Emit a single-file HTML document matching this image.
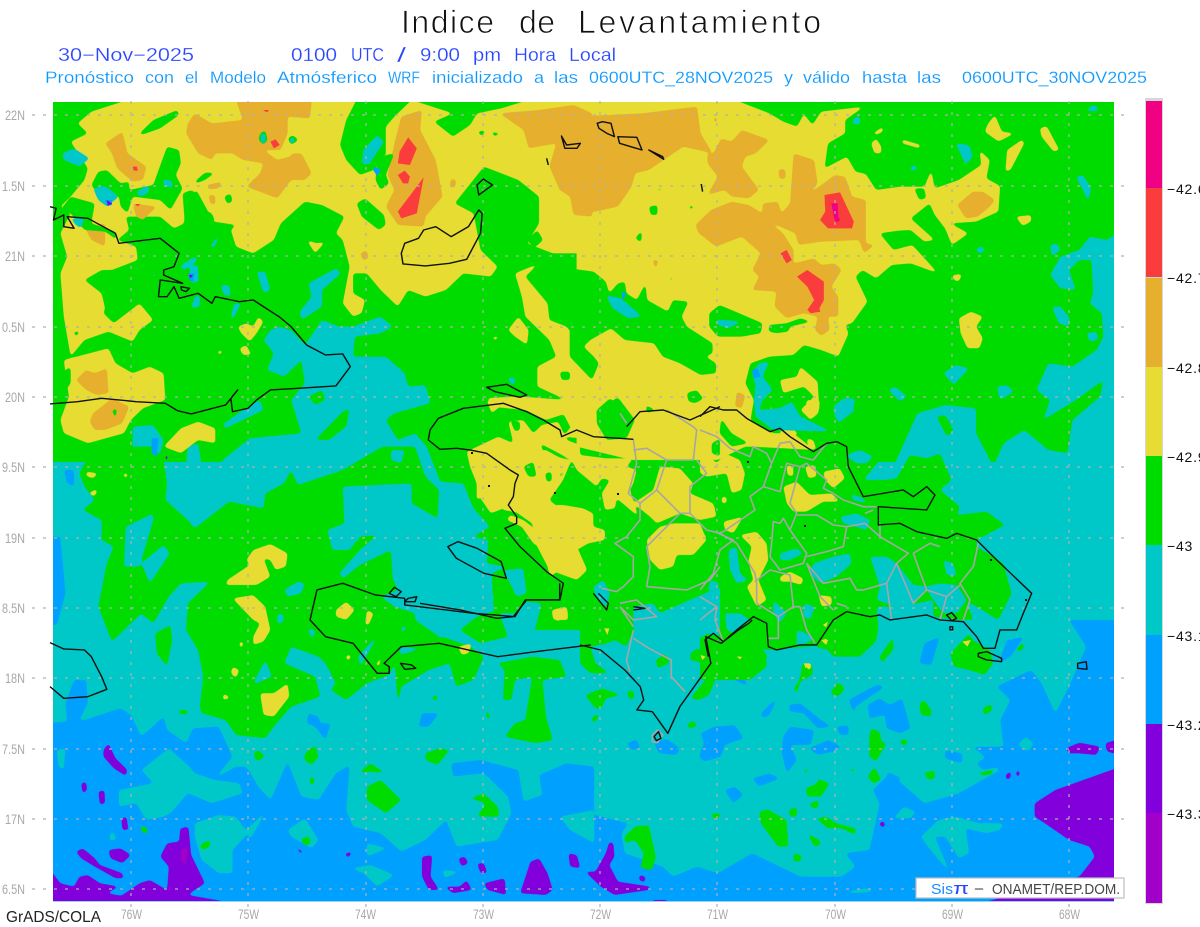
<!DOCTYPE html>
<html><head><meta charset="utf-8"><title>Indice de Levantamiento</title>
<style>
html,body{margin:0;padding:0;background:#fff;width:1200px;height:927px;overflow:hidden}
svg{position:absolute;left:0;top:0;display:block}
text{font-family:"Liberation Sans",sans-serif}
.g{fill:#00dc00}.t{fill:#00c8c8}.b{fill:#00a0ff}.p{fill:#8200dc}.m{fill:#a000c8}.y{fill:#e6dc32}.o{fill:#e6af2d}.r{fill:#fa3c3c}.k{fill:#f00082}
.lab{fill:#a8a8a8;font-size:14px}
.cb{fill:#111;font-size:14px;letter-spacing:.8px}
.ti{font-size:32px;fill:#111;stroke:#fff;stroke-width:.8px}
.r2{font-size:18px;fill:#2846ff;stroke:#fff;stroke-width:.2px}
.r3{font-size:16.5px;fill:#0c98ff;stroke:#fff;stroke-width:.15px}
</style></head><body>
<svg width="1200" height="927" viewBox="0 0 1200 927" xmlns="http://www.w3.org/2000/svg">
<defs><clipPath id="mc"><rect x="53" y="102" width="1061" height="799"/></clipPath>
<filter id="s" x="-5%" y="-5%" width="110%" height="110%" color-interpolation-filters="sRGB"><feGaussianBlur stdDeviation="4.5"/><feComponentTransfer><feFuncA type="linear" slope="6" intercept="-2.5"/></feComponentTransfer></filter></defs>
<g clip-path="url(#mc)">
<rect x="53" y="101" width="1061" height="800" class="g"/>
<rect x="53" y="462" width="1061" height="440" class="t"/>
<!-- teal top-left -->
<g class="t" filter="url(#s)" transform="translate(50,100) scale(.3444,.3333)">
<path d="M640,690 665,680 700,690 740,735 790,660 840,680 880,680 960,650 995,680 960,700 885,710 880,770 975,770 1030,820 1040,860 1090,855 1105,910 1000,940 975,960 1010,1020 1060,1000 1135,1090 490,1090 580,1015 730,1000 700,900 740,850 730,780 680,830 630,810 650,760 620,720Z"/>
<path d="M500,975 560,930 610,900 620,930 560,960 510,985Z"/>
<path d="M240,980 300,975 330,1020 320,1060 240,1090Z"/>
<path d="M150,1090 180,1035 230,1090Z"/>
<path d="M395,1090 400,1040 430,1030 440,1090Z"/>
</g>
<!-- teal right -->
<g class="t" filter="url(#s)" transform="translate(580,100) scale(.3444,.3333)">
<path d="M1570,390 1530,420 1480,410 1450,450 1395,470 1365,525 1395,565 1440,570 1420,510 1450,480 1485,480 1490,580 1480,610 1515,640 1520,710 1500,750 1430,800 1360,790 1325,870 1365,900 1345,960 1440,900 1520,840 1510,890 1430,960 1415,1060 1360,1050 1290,990 1230,1030 1200,1100 1150,1000 1150,925 1060,915 980,940 910,1100 1570,1100Z"/>
</g>
<!-- blue base -->
<g class="b" filter="url(#s)" transform="translate(50,450) scale(.3444,.3333)">
<path d="M-10,820 100,810 205,775 235,795 265,860 330,800 340,840 395,880 415,835 490,830 530,920 480,985 540,950 570,950 605,1010 640,1050 690,935 730,1040 780,1050 830,970 870,945 860,1080 880,1130 960,1150 1020,1205 1090,1170 1150,1110 1180,1190 1300,1170 1340,1090 1330,1040 1260,970 1170,980 1165,940 1250,930 1360,960 1375,1055 1430,1035 1420,975 1500,940 1580,950 1580,1380 -10,1380Z"/>
<path d="M-10,260 30,260 45,430 20,525 -10,525Z"/>
<path d="M750,790 780,800 785,820 815,820 800,870 770,830 745,820Z"/>
<path d="M1080,790 1130,790 1100,830 1070,830Z"/>
<path d="M40,60 70,60 70,110 50,100Z"/>
<path d="M70,690 105,690 110,760 80,820 50,820 45,760Z"/>
</g>
<g class="b" filter="url(#s)" transform="translate(580,620) scale(.3444,.3333)">
<path d="M-10,570 100,600 140,610 120,640 130,700 240,740 270,770 340,740 400,760 500,700 640,770 760,770 800,740 770,700 840,690 860,600 870,550 850,510 900,460 1000,550 1100,520 1220,450 1140,380 1230,380 1220,300 1250,240 1210,200 1310,150 1340,190 1380,280 1420,200 1470,80 1420,0 1570,0 1570,870 -10,870Z"/>
<path d="M135,370 165,358 175,385 150,390Z"/><path d="M215,370 250,355 290,385 280,405 230,400Z"/>
<path d="M350,340 390,320 450,315 475,355 420,375 410,410 360,425 345,410 360,370Z"/>
<path d="M590,350 610,320 680,330 670,375 610,375 630,420 600,460 585,395Z"/>
<path d="M665,385 720,360 760,380 735,395 690,405Z"/><path d="M500,475 550,460 580,475 520,500Z"/>
<path d="M420,510 450,500 475,525 445,550Z"/><path d="M525,280 575,230 550,285 530,295Z"/>
<path d="M605,255 640,250 700,300 730,320 690,325 650,280 610,275Z"/><path d="M745,320 780,315 780,345 755,345Z"/>
<path d="M835,255 870,235 900,255 935,235 950,290 960,325 930,340 890,325 885,285 840,295Z"/>
<path d="M780,240 860,195 885,200 800,260 795,280Z"/><path d="M-10,440 40,470 10,540 -10,550Z"/>
<path d="M890,455 935,475 900,490Z"/><path d="M985,130 1000,70 1045,50 1030,100 1020,135Z"/>
<path d="M415,140 450,135 490,200 450,180 415,160Z"/><path d="M1060,390 1110,400 1110,430 1060,415Z"/>
<path d="M1150,430 1200,400 1230,400 1220,440 1170,450Z"/>
<path d="M1240,60 1290,50 1250,110 1215,130Z"/>
</g>
<!-- teal islands on blue -->
<g class="t" filter="url(#s)" transform="translate(50,450) scale(.3444,.3333)">
<path d="M265,960 345,895 405,950 420,970 480,990 550,1000 560,1030 470,1060 400,1030 350,1090 330,1100 280,1110 250,1060 200,1070 200,1020 300,1000Z"/>
<path d="M20,900 45,895 40,960 25,950Z"/>
<path d="M690,1140 740,1105 780,1170 760,1195 700,1160Z"/>
<path d="M420,1120 490,1095 540,1100 575,1150 530,1200 530,1270 490,1270 440,1230 420,1160Z"/>
<path d="M570,1140 630,1080 580,1170Z"/>
<path d="M875,1255 930,1245 1000,1275 950,1310 910,1270Z"/>
<path d="M920,1180 980,1195 920,1220Z"/>
<path d="M1140,1260 1190,1265 1145,1285Z"/>
<path d="M180,1140 195,1170 170,1170Z"/>
<path d="M1480,1100 1580,1080 1580,1180 1510,1140Z"/>
</g>
<g class="t" filter="url(#s)" transform="translate(580,620) scale(.3444,.3333)">
<path d="M990,650 1040,600 1090,590 1160,610 1230,610 1220,630 1180,640 1120,625 1130,700 1100,715 1060,650 1030,650 1075,760 1050,730 1010,680Z"/>
<path d="M910,595 940,560 975,575 960,595Z"/><path d="M1270,375 1295,350 1318,370 1300,395Z"/>
<path d="M770,815 830,805 860,815 790,820Z"/>
</g>
<!-- purple -->
<g class="p" filter="url(#s)" transform="translate(50,450) scale(.3444,.3333)">
<path d="M155,900 170,880 190,925 225,960 220,978 185,955 155,920Z"/><path d="M90,1000 105,995 108,1020 95,1032Z"/>
<path d="M140,1025 158,1020 160,1060 145,1065Z"/><path d="M207,1105 222,1100 228,1140 210,1140Z"/>
<path d="M75,1205 95,1195 130,1225 145,1245 210,1270 215,1285 190,1285 130,1250 90,1225Z"/>
<path d="M170,1200 205,1195 235,1215 210,1240 175,1225Z"/>
<path d="M-10,1245 30,1300 70,1310 85,1280 110,1275 145,1300 200,1310 165,1330 250,1345 500,1353 500,1370 -10,1370Z"/>
<path d="M320,1220 340,1180 375,1175 378,1135 402,1130 410,1215 450,1300 420,1320 400,1335 500,1353 500,1370 185,1370 185,1353 260,1300 290,1290 340,1320 345,1250Z"/>
<path d="M1080,1220 1110,1215 1105,1280 1130,1320 1100,1320 1080,1280Z"/>
<path d="M1145,1310 1190,1310 1210,1290 1225,1320 1170,1330Z"/><path d="M1185,1225 1205,1220 1215,1240 1195,1250Z"/>
<path d="M1240,1240 1260,1240 1270,1270 1250,1270Z"/><path d="M1260,1300 1320,1285 1325,1335 1270,1320Z"/>
<path d="M1365,1330 1395,1235 1420,1225 1445,1270 1460,1320 1440,1335Z"/><path d="M1505,1210 1530,1215 1540,1255 1510,1250Z"/>
<path d="M710,1185 740,1210 725,1210Z"/><path d="M855,1210 880,1205 865,1225Z"/><path d="M1555,1270 1580,1265 1580,1280Z"/>
</g>
<path class="m" transform="translate(50,450) scale(.3444,.3333)" d="M380,1200 400,1190 395,1245 380,1230Z"/>
<g class="p" filter="url(#s)" transform="translate(580,620) scale(.3444,.3333)">
<path d="M1320,550 1380,510 1570,440 1570,870 1180,870 1180,845 1450,770 1495,710 1480,680 1420,660 1350,610 1320,590Z"/>
<path d="M15,755 45,755 75,700 85,665 97,670 100,710 85,735 110,785 205,800 200,810 100,825 60,800Z"/>
<path d="M170,770 175,765 190,770 190,785 175,785Z"/><path d="M870,605 885,605 885,622 872,620Z"/>
<path d="M1410,385 1450,368 1510,380 1500,405 1450,400 1420,400Z"/><path d="M1525,370 1570,355 1570,405 1530,395Z"/>
<path d="M1235,465 1252,452 1250,475 1238,480Z"/><path d="M1265,455 1278,450 1275,472 1268,470Z"/>
<path d="M210,840 255,840 255,860 210,860Z"/>
</g>
<!-- green over teal -->
<g class="g" filter="url(#s)" transform="translate(50,450) scale(.3444,.3333)">
<path d="M85,70 100,40 135,-10 300,-10 330,30 340,100 335,150 400,210 420,235 520,155 620,175 625,130 680,100 700,60 720,105 850,60 965,-10 1060,-10 1090,80 1130,120 1125,205 1050,160 1050,100 850,110 855,220 805,240 820,300 870,300 900,260 950,255 900,300 840,370 850,385 900,345 990,300 995,385 1010,420 960,440 1000,470 1060,490 1060,510 1130,560 1130,600 1000,590 1020,600 985,675 920,700 860,750 815,720 830,700 800,640 780,620 700,590 680,640 770,680 785,740 700,770 650,830 625,865 540,855 510,810 440,790 435,770 445,680 430,600 395,540 400,460 465,395 380,400 345,440 300,520 265,490 180,575 140,470 165,340 185,290 150,270 150,210 95,180 130,150 100,110Z"/>
<path d="M1010,770 1020,710 1100,660 1160,640 1180,710 1230,690 1260,620 1220,590 1140,560 1100,590 1000,620Z"/>
<path d="M1300,640 1400,620 1480,630 1500,680 1430,690 1440,800 1460,870 1410,880 1320,860 1350,820 1380,810 1400,680 1350,690 1340,750 1315,750 1320,660Z"/>
<path d="M1300,480 1330,560 1250,580 1190,540 1240,500Z"/>
<path d="M305,550 350,525 355,570 340,650 310,610Z"/><path d="M740,910 770,885 780,920 760,945 738,930Z"/>
<path d="M590,910 605,900 625,920 600,935Z"/><path d="M895,970 930,940 975,970 930,965Z"/>
<path d="M920,1010 960,990 1020,1050 975,1090 920,1050Z"/><path d="M1090,910 1130,895 1160,900 1125,945 1090,930Z"/>
<path d="M1220,1045 1260,1030 1300,1070 1305,1100 1240,1100 1265,1060Z"/><path d="M760,970 770,1000 752,1005Z"/>
<path d="M1260,770 1280,800 1270,810Z"/><path d="M1105,740 1130,735 1120,755Z"/><path d="M375,780 400,780 400,795 370,790Z"/>
<path d="M440,1180 470,1170 460,1195 435,1200Z"/><path d="M730,1165 755,1160 755,1185 735,1185Z"/>
<path d="M260,1130 280,1130 285,1150 270,1150Z"/>
</g>
<g class="g" filter="url(#s)" transform="translate(420,380) scale(.3333)">
<path d="M30,0 900,0 900,750 340,750 360,670 320,665 290,700 240,700 225,750 215,580 260,560 200,550 205,480 160,470 210,440 160,385 130,310 60,305 55,290 20,200 10,150 30,60Z"/>
</g>
<g class="g" filter="url(#s)" transform="translate(700,400) scale(.3333)">
<path d="M0,0 640,0 640,50 615,120 540,180 490,240 555,240 590,235 630,165 680,175 720,160 755,240 720,270 780,320 770,345 860,335 915,375 830,420 830,440 910,490 935,580 895,660 830,620 800,605 820,660 790,660 700,650 700,600 600,620 530,620 535,680 530,720 480,770 400,770 370,735 210,750 130,740 200,780 200,800 150,840 0,840Z"/>
</g>
<g class="g" filter="url(#s)" transform="translate(580,620) scale(.3444,.3333)">
<path d="M0,-5 130,-5 155,30 135,80 100,60 80,70 30,80 45,130 85,160 30,160 0,130Z"/>
<path d="M15,225 65,205 120,225 75,235 60,270 40,260Z"/><path d="M135,215 155,210 158,235 145,240Z"/>
<path d="M35,290 55,280 50,300 35,310Z"/><path d="M220,120 250,100 260,130 225,145Z"/>
<path d="M320,100 340,85 375,100 360,130 320,120Z"/><path d="M405,80 440,60 520,70 545,110 520,155 490,165 500,120 450,130 410,115Z"/>
<path d="M620,210 640,170 645,130 675,135 675,165 640,185 630,220Z"/><path d="M725,220 750,185 770,205 750,230Z"/>
<path d="M320,235 375,165 395,175 375,225 345,240Z"/><path d="M310,315 330,300 340,320 315,325Z"/>
<path d="M840,350 845,325 870,335 875,365 890,370 860,425 840,410Z"/><path d="M835,470 855,440 875,480 850,490Z"/>
<path d="M985,250 1000,240 1020,270 1020,290 990,285Z"/><path d="M1170,265 1195,250 1195,275 1170,285Z"/>
<path d="M925,365 950,355 950,375 935,375Z"/><path d="M995,460 1030,450 1030,475 1015,480Z"/>
<path d="M1150,460 1195,450 1205,460 1170,467Z"/><path d="M645,455 675,440 655,462Z"/><path d="M782,450 805,440 790,460Z"/>
<path d="M655,505 690,490 690,475 725,490 700,530 660,530Z"/><path d="M665,550 695,540 690,565 675,565Z"/>
<path d="M605,570 630,560 630,590 610,590Z"/><path d="M520,575 545,568 600,600 605,680 575,680 525,610Z"/>
<path d="M685,595 715,590 745,610 800,625 800,645 760,625 720,625Z"/><path d="M660,640 695,660 700,675 680,680Z"/>
<path d="M620,700 645,705 640,725 620,725Z"/><path d="M130,650 160,620 200,615 220,710 210,750 175,745 185,700 160,660 130,670Z"/>
<path d="M380,580 410,580 400,598 385,595Z"/><path d="M1075,100 1130,40 1140,60 1190,90 1200,130 1175,165 1130,150 1085,140Z"/>
<path d="M870,110 910,50 910,90 875,130Z"/><path d="M1260,100 1285,65 1290,85Z"/>
<path d="M680,80 720,40 745,-5 860,-5 855,70 805,115 795,135 810,90 770,95 740,60 720,90Z"/>
</g>
<!-- teal pockets -->
<g class="t" filter="url(#s)" transform="translate(50,450) scale(.3444,.3333)">
<path d="M220,230 300,190 300,210 260,350 215,350Z"/><path d="M265,340 330,285 348,310 290,400Z"/>
<path d="M680,420 720,395 740,400 730,430 690,440Z"/><path d="M660,490 680,495 675,520 660,520Z"/>
<path d="M590,700 625,630 645,680 600,700Z"/><path d="M745,535 770,540 765,570Z"/><path d="M895,620 960,545 900,650Z"/>
<path d="M1020,530 1040,530 1020,550Z"/><path d="M990,0 1030,0 1020,40 990,30Z"/>
</g>
<g class="t" filter="url(#s)" transform="translate(700,400) scale(.3333)">
<path d="M400,20 430,-5 465,-5 460,30 410,65Z"/><path d="M440,170 450,160 480,150 520,170 500,190 470,190Z"/>
<path d="M420,350 470,340 510,360 500,390 450,375 430,370Z"/><path d="M340,490 400,470 450,460 455,490 410,530 360,550 330,520Z"/>
<path d="M240,460 290,445 310,460 270,480 240,480Z"/><path d="M510,470 560,470 590,490 640,555 680,560 660,590 630,620 600,630 560,610 530,600 540,560Z"/>
<path d="M675,560 720,550 770,555 800,600 770,640 730,640 700,600Z"/><path d="M85,450 110,440 120,520 145,540 110,550 90,510Z"/>
<path d="M30,540 60,550 40,580 25,570Z"/><path d="M220,600 260,640 240,670 220,640Z"/><path d="M310,610 345,620 330,660 310,650Z"/>
<path d="M290,690 320,700 340,720 290,740Z"/><path d="M730,480 760,490 770,530 740,525Z"/><path d="M75,640 120,640 150,660 100,700 80,690Z"/>
<path d="M0,660 50,670 60,710 20,700 0,720Z"/><path d="M450,280 490,295 500,310 460,300Z"/>
</g>
<g class="t" filter="url(#s)" transform="translate(420,380) scale(.3333)">
<path d="M520,620 550,600 570,640 560,680 530,660Z"/><path d="M640,680 700,670 720,700 900,620 900,750 640,750Z"/>
<path d="M250,570 310,565 320,640 290,650Z"/><path d="M320,670 365,670 345,750 250,750Z"/>
</g>
<!-- big yellow -->
<g class="y" filter="url(#s)" transform="translate(50,100) scale(.3444,.3333)">
<path d="M80,70 120,35 225,0 890,0 860,60 842,135 860,180 900,225 940,210 975,165 975,80 1000,50 1050,0 1170,40 1115,65 1170,110 1220,75 1240,40 1310,25 1390,0 1575,0 1575,460 1460,460 1385,430 1420,370 1420,290 1360,240 1260,200 1175,310 1230,340 1250,450 1300,500 1280,530 1200,520 1150,570 1090,590 1040,570 1010,620 960,570 920,520 880,520 880,580 915,600 905,640 880,650 850,610 870,500 850,420 830,400 855,350 790,315 740,305 670,370 650,420 590,460 540,440 525,390 540,375 475,365 425,270 390,310 390,370 360,385 320,350 220,350 230,390 195,420 250,440 255,480 180,510 150,510 100,540 150,580 160,625 155,640 185,670 260,610 300,660 260,690 240,725 170,695 100,720 60,770 40,650 30,520 50,470 30,400 60,340 30,320 60,290 100,240 110,205 60,125 110,100Z"/>
<path d="M1350,520 1420,490 1380,530 1445,610 1450,660 1500,680 1575,780 1575,880 1500,900 1415,860 1415,800 1470,770 1450,720 1380,650 1370,590Z"/>
<path d="M1500,880 1575,870 1575,1010 1520,1000 1490,940Z"/>
<path d="M40,780 170,745 190,790 240,820 290,800 330,820 335,900 270,925 235,960 215,1000 110,1030 40,1000 30,960 55,890 45,820Z"/>
<path d="M330,1040 380,985 430,965 480,985 480,1030 430,1020 380,1060Z"/>
<path d="M545,680 570,670 590,680 605,650 620,665 600,700 580,725 555,700Z"/><path d="M745,420 775,430 800,425 770,460Z"/>
<path d="M550,745 570,735 585,765 560,765Z"/><path d="M480,755 505,750 495,765Z"/><path d="M1280,715 1305,705 1295,722Z"/>
<path d="M1330,690 1360,650 1390,690 1385,735 1350,710Z"/>
<path d="M1270,895 1340,890 1370,890 1500,900 1500,940 1440,960 1380,930 1280,920Z"/>
</g>
<g class="y" filter="url(#s)" transform="translate(580,100) scale(.3444,.3333)">
<path d="M-10,0 450,0 550,40 590,65 630,80 650,42 675,75 700,35 825,20 770,60 770,100 720,130 710,205 775,170 800,215 830,222 860,270 930,260 1000,260 1020,210 1030,265 1100,240 1165,195 1160,150 1190,180 1180,235 1220,258 1215,335 1150,365 1075,370 1128,400 1080,435 1060,385 1030,345 1015,310 960,355 1030,420 1000,425 960,390 925,392 870,400 910,450 965,435 1040,520 960,490 905,495 860,535 820,510 800,530 835,605 790,670 770,675 780,700 750,770 700,750 650,735 620,765 550,770 495,790 480,850 505,900 495,960 560,1000 620,1000 680,1050 500,1040 480,1040 400,1080 150,1080 -10,1040Z"/>
<path d="M640,800 690,845 695,930 665,955 640,930 680,890 650,860 590,880 580,840 630,830Z"/>
<path d="M1185,70 1205,45 1225,95 1262,100 1215,125 1175,95Z"/><path d="M1335,85 1355,78 1392,150 1375,155 1340,110Z"/>
<path d="M1240,150 1285,118 1290,130 1250,210 1235,215Z"/><path d="M845,130 860,115 875,140 875,160 855,160Z"/>
<path d="M850,100 880,80 880,95 860,105Z"/><path d="M935,118 990,135 985,145 935,130Z"/><path d="M1265,350 1310,345 1310,365 1285,378Z"/>
<path d="M1100,655 1135,635 1170,650 1150,680 1170,715 1160,745 1125,745 1105,700Z"/><path d="M1080,525 1110,522 1100,545 1085,540Z"/>
</g>
<!-- Haiti / DR yellow -->
<g class="y" filter="url(#s)" transform="translate(420,380) scale(.3333)">
<path d="M140,215 235,170 280,190 265,125 310,120 340,160 365,135 415,125 440,180 480,195 480,225 560,235 640,235 620,260 650,270 640,310 630,330 655,410 590,355 585,385 555,390 545,340 570,300 545,295 530,320 470,270 455,240 360,190 370,215 455,245 415,305 385,275 365,320 350,350 345,370 305,400 250,390 225,360 210,400 190,350 170,360 170,310 150,260Z"/>
<path d="M365,375 430,375 490,385 520,400 520,440 555,450 555,480 505,490 470,510 480,530 450,540 450,590 420,570 390,590 370,510 340,490 305,440 260,420 270,405 310,420 350,450 390,440 400,410Z"/>
<path d="M640,370 700,330 720,260 780,265 820,310 810,340 880,370 890,410 840,420 780,400 710,430 690,410Z"/>
<path d="M680,480 720,440 760,430 840,430 860,480 820,525 770,525 760,560 720,570 690,540Z"/>
<path d="M690,115 730,165 770,190 800,240 760,230 720,230 680,200 640,190 650,130Z"/>
<path d="M830,170 870,150 890,170 870,190 870,240 830,240Z"/>
<path d="M200,60 290,60 290,75 240,80 215,100Z"/>
<path d="M395,690 440,680 445,720 400,720Z"/>
<path d="M440,0 540,0 530,90 530,180 430,170 460,130 450,70Z"/>
</g>
<g class="y" filter="url(#s)" transform="translate(700,400) scale(.3333)">
<path d="M0,90 30,90 50,130 30,170 50,190 75,160 120,180 135,220 125,270 95,280 80,220 20,230 0,220Z"/>
<path d="M0,290 40,320 50,320 20,360 0,340Z"/><path d="M250,260 290,245 330,285 395,280 420,305 370,305 320,335 280,335 260,310Z"/>
<path d="M370,215 420,205 435,235 400,265 375,240Z"/><path d="M315,200 345,195 350,230 325,235Z"/><path d="M260,195 280,200 280,230 262,225Z"/>
<path d="M120,405 170,395 200,430 205,480 175,540 200,600 170,620 140,560 160,540 145,485 155,440Z"/>
<path d="M240,530 270,515 310,535 305,555 270,545 240,545Z"/><path d="M355,585 395,590 395,615 365,620Z"/>
<path d="M70,365 130,350 100,400 75,390Z"/><path d="M0,390 20,410 0,440Z"/><path d="M235,95 275,85 295,100 260,125Z"/>
<path d="M320,0 360,0 355,40 330,60 315,40Z"/><path d="M320,115 340,120 350,150 325,145Z"/><path d="M65,290 80,290 80,310 65,310Z"/>
<path d="M360,720 385,715 380,735Z"/><path d="M310,790 335,790 330,815Z"/><path d="M205,20 220,20 215,35Z"/><path d="M365,680 385,660 375,680Z"/>
<path d="M0,0 160,0 130,30 110,30 70,20 20,30 0,50Z"/>
</g>
<g class="y" filter="url(#s)" transform="translate(50,450) scale(.3444,.3333)">
<path d="M570,330 590,300 640,282 690,310 685,350 655,360 640,330 620,325 640,380 600,405 510,405 515,390 580,345Z"/>
<path d="M530,445 590,435 625,470 640,540 620,575 590,585 590,560 610,520 590,510Z"/>
<path d="M610,730 650,730 690,700 695,740 650,800 620,795Z"/><path d="M860,455 885,480 860,510 830,500 830,480Z"/>
<path d="M920,480 940,490 925,525 915,525Z"/><path d="M530,650 550,660 540,685 525,670Z"/><path d="M505,730 525,745 500,750Z"/>
<path d="M105,65 140,70 125,85 105,78Z"/><path d="M210,70 228,70 220,88Z"/><path d="M110,130 140,115 130,140Z"/>
<path d="M550,575 562,575 558,595 550,590Z"/><path d="M860,615 875,615 870,630 860,630Z"/><path d="M945,645 968,610 955,650Z"/>
<path d="M1185,590 1225,580 1215,610 1195,615Z"/><path d="M1460,480 1500,470 1505,500 1470,515Z"/>
<path d="M1210,0 1440,0 1510,40 1490,90 1450,150 1510,200 1530,290 1560,360 1530,390 1450,360 1410,280 1400,220 1330,170 1280,190 1240,130 1280,80Z"/>
</g>
<g class="y" transform="translate(580,620) scale(.3444,.3333)">
<path d="M70,25 85,25 80,45Z"/><path d="M350,105 365,110 355,120Z"/><path d="M1110,65 1135,60 1125,80Z"/>
<path d="M700,60 720,60 715,75Z"/><path d="M705,15 720,5 715,22Z"/><path d="M650,130 665,130 655,145Z"/><path d="M455,110 470,110 465,118Z"/>
</g>
<!-- orange -->
<g class="o" filter="url(#s)" transform="translate(50,100) scale(.3444,.3333)">
<path d="M400,70 420,40 470,70 560,60 540,0 760,0 755,55 690,50 690,100 670,150 620,150 660,180 730,160 760,220 740,240 700,240 660,295 570,260 610,220 620,190 560,180 530,160 480,160 470,180 430,160 395,100Z"/>
<path d="M160,130 210,95 225,160 280,200 270,240 240,245 195,205 180,160Z"/>
<path d="M980,225 1000,130 1020,50 1080,30 1075,90 1120,180 1140,290 1090,350 1085,380 1010,375 975,320 1000,270Z"/>
<path d="M1305,40 1420,30 1520,15 1575,40 1575,350 1520,345 1510,290 1480,270 1450,200 1470,130 1390,145 1375,90Z"/>
<path d="M75,840 105,810 130,820 165,805 170,880 135,885 105,870Z"/>
<path d="M125,940 150,920 180,895 230,920 210,970 160,990 130,990 115,965Z"/>
<path d="M100,380 160,370 160,440 120,420Z"/><path d="M240,310 310,320 270,360 250,350Z"/>
<path d="M455,255 500,245 490,265 460,268Z"/><path d="M460,285 480,285 480,315 465,310Z"/>
<path d="M700,160 730,160 755,210 730,235 710,200Z"/>
<path d="M900,460 920,450 925,475 910,482Z"/>
<path d="M1165,235 1180,240 1175,265 1160,260Z"/>
</g>
<g class="o" filter="url(#s)" transform="translate(580,100) scale(.3444,.3333)">
<path d="M-10,50 180,40 340,20 350,100 385,160 300,140 200,210 160,220 150,260 110,320 20,340 30,270 -10,240Z"/>
<path d="M335,375 380,330 440,305 490,315 530,340 530,310 575,305 585,340 560,375 590,400 620,450 620,490 680,475 700,495 740,490 760,510 730,560 750,590 750,650 720,650 725,690 700,708 682,690 690,650 650,640 600,655 565,620 570,575 500,570 520,530 500,510 525,460 470,410 395,440 345,400Z"/>
<path d="M620,160 680,180 690,250 655,290 740,225 770,230 790,290 830,300 830,430 855,435 825,460 810,420 700,425 635,435 625,400 560,370 585,340 610,310Z"/>
<path d="M370,160 385,165 410,115 440,125 470,90 550,120 510,160 480,170 470,200 520,270 490,295 440,290 420,270 370,285 400,230 370,190Z"/>
<path d="M1095,315 1140,275 1170,275 1205,300 1190,320 1155,350 1120,355Z"/>
<path d="M210,480 228,480 220,510Z"/><path d="M575,210 595,205 598,235 580,238Z"/><path d="M385,50 400,55 395,75Z"/>
<path d="M455,875 480,885 470,925 450,920Z"/>
</g>
<!-- red -->
<g class="r" transform="translate(50,100) scale(.3444,.3333)">
<path d="M1015,155 1040,112 1065,145 1045,195 1010,190Z"/><path d="M1010,225 1030,212 1045,230 1040,250 1025,250Z"/>
<path d="M1010,335 1050,280 1085,232 1065,340 1020,355Z"/><path d="M640,125 655,118 667,135 650,145Z"/>
<path d="M240,200 252,200 255,212 243,212Z"/><path d="M618,30 636,30 630,37Z"/><path d="M247,312 262,312 255,320Z"/>
</g>
<g class="r" transform="translate(580,100) scale(.3444,.3333)">
<path d="M710,285 755,277 795,365 790,385 720,385 697,360 712,335Z"/><path d="M582,460 600,450 615,480 600,490Z"/>
<path d="M630,530 660,510 708,545 708,600 695,625 698,635 670,640 660,630 680,600 660,560Z"/>
</g>
<path class="k" transform="translate(580,100) scale(.3444,.3333)" d="M730,310 748,310 750,350 755,360 745,368 738,355Z"/>
<!-- green on yellow -->
<g class="g" filter="url(#s)" transform="translate(50,100) scale(.3444,.3333)">
<path d="M260,100 300,60 370,30 375,45 320,85 265,105Z"/><path d="M420,245 450,218 480,218 450,240 425,250Z"/>
<path d="M890,310 915,295 970,345 975,375 955,390 905,350Z"/><path d="M505,290 525,280 530,305 515,312Z"/>
<path d="M610,100 625,90 632,120 620,135 605,120Z"/><path d="M690,115 705,105 722,120 700,135Z"/>
<path d="M140,215 165,210 205,250 230,245 230,270 300,255 310,225 340,140 375,150 380,190 365,225 385,265 350,330 320,300 240,290 225,340 205,320 200,290 130,270 120,255Z"/>
<path d="M30,330 60,290 130,310 120,370 190,395 195,420 160,395 100,390 60,340Z"/>
<path d="M950,190 975,165 1000,160 975,225 985,250 960,270 945,240Z"/>
<path d="M385,280 410,270 425,280 430,320 470,340 480,365 420,370 390,350Z"/>
<path d="M1240,95 1265,90 1255,110Z"/><path d="M1280,95 1310,100 1290,110Z"/>
<path d="M1385,420 1415,390 1432,420 1405,445Z"/>
<path d="M1480,815 1510,815 1510,840 1485,840Z"/>
<path d="M30,820 60,800 60,850 40,880Z"/>
<path d="M65,700 85,690 80,710Z"/>
<path d="M180,930 195,925 190,960Z"/>
</g>
<g class="g" filter="url(#s)" transform="translate(580,100) scale(.3444,.3333)">
<path d="M-30,505 40,515 75,545 85,580 110,550 130,545 135,580 165,600 190,550 195,600 255,635 270,600 315,605 295,650 310,680 385,730 385,760 365,770 395,790 395,820 350,825 290,790 240,770 215,730 130,720 90,685 30,720 10,740 40,770 55,790 35,840 -30,770Z"/>
<path d="M375,640 405,615 440,630 530,670 525,700 470,710 400,710 375,680Z"/>
<path d="M548,675 600,670 640,655 672,665 610,680 605,695 570,700 548,695Z"/>
<path d="M45,935 110,892 160,960 140,1000 100,1000 60,970Z"/>
<path d="M190,915 220,930 195,940Z"/><path d="M310,880 330,872 360,895 335,910 315,905Z"/>
<path d="M410,955 440,1000 490,1030 440,1040 405,1000Z"/>
<path d="M200,320 225,315 225,345 205,345Z"/><path d="M315,315 335,320 320,330Z"/><path d="M225,262 238,265 230,280Z"/>
<path d="M160,415 180,390 178,428Z"/><path d="M255,540 285,515 262,545Z"/><path d="M500,50 512,45 512,60Z"/>
<path d="M970,265 1000,265 1005,295 985,300Z"/>
</g>
<g class="g" filter="url(#s)" transform="translate(420,380) scale(.3333)">
<path d="M530,90 570,55 620,90 640,130 620,175 560,180 530,130Z"/><path d="M800,40 830,30 850,55 820,70Z"/>
<path d="M875,190 900,175 900,230 875,220Z"/><path d="M310,260 340,245 350,290 325,290Z"/><path d="M375,280 395,275 395,305 380,305Z"/>
<path d="M420,280 440,270 415,300Z"/><path d="M270,120 300,125 300,150 285,155Z"/>
</g>
<!-- teal on green top -->
<g class="t" filter="url(#s)" transform="translate(50,100) scale(.3444,.3333)">
<path d="M35,160 70,145 115,175 85,200 40,180Z"/><path d="M125,265 160,258 200,290 165,320 140,300Z"/>
<path d="M910,150 950,105 970,125 925,195 905,190Z"/><path d="M750,550 830,505 845,520 790,570 790,620 730,660 725,635 760,590Z"/>
<path d="M600,515 625,515 640,570 620,580Z"/><path d="M375,500 420,470 430,480 390,510Z"/><path d="M495,555 520,555 525,590 505,585Z"/>
<path d="M465,440 485,410 490,415 475,445Z"/><path d="M250,275 290,255 285,280 260,290Z"/><path d="M325,240 350,240 360,260 335,262Z"/>
<path d="M405,500 430,495 432,545 410,550Z"/><path d="M612,100 625,100 625,130 612,130Z"/><path d="M693,118 708,112 712,125 700,132Z"/>
<path d="M285,522 312,522 305,532Z"/><path d="M420,590 435,585 435,620 410,625Z"/>
<path d="M535,610 555,610 530,660 525,650Z"/><path d="M60,355 100,355 90,385 75,375Z"/><path d="M1330,835 1350,830 1350,855 1335,850Z"/>
</g>
<g class="g" filter="url(#s)" transform="translate(50,100) scale(.3444,.3333)">
<path d="M770,1020 850,935 870,925 860,980 810,1020Z"/><path d="M750,890 790,870 800,900 770,915Z"/>
</g>
<g class="t" filter="url(#s)" transform="translate(580,100) scale(.3444,.3333)">
<path d="M75,585 120,595 180,650 140,655 95,625Z"/><path d="M395,658 470,665 430,685 400,675Z"/><path d="M1090,130 1130,135 1140,170 1120,195 1100,150Z"/>
<path d="M500,820 520,790 550,785 530,830 560,870 530,900 520,930 580,925 615,905 640,950 730,995 560,990 510,950 505,900 510,860Z"/>
<path d="M735,930 770,900 800,930 750,970Z"/><path d="M895,870 915,860 950,890 930,905Z"/><path d="M1210,860 1240,855 1260,875 1220,900Z"/>
<path d="M1055,820 1090,795 1130,805 1085,855Z"/><path d="M1365,435 1385,430 1395,450 1370,470Z"/><path d="M1150,445 1170,438 1175,455 1155,460Z"/>
<path d="M1370,620 1395,620 1420,650 1420,680 1390,670Z"/><path d="M1440,230 1460,225 1485,265 1475,305 1465,280Z"/><path d="M1480,20 1500,15 1505,35 1470,32Z"/>
<path d="M790,60 810,45 815,70 795,75Z"/><path d="M960,200 975,195 980,210 958,212Z"/><path d="M1470,700 1500,695 1505,720 1480,725Z"/>
</g>
<path class="g" filter="url(#s)" transform="translate(580,100) scale(.3444,.3333)" d="M1035,950 1060,945 1085,990 1065,1010Z"/>
<!-- blue specks top -->
<g class="b" transform="translate(50,100) scale(.3444,.3333)">
<path d="M295,1015 315,1015 310,1070 295,1060Z"/><path d="M945,200 960,210 950,228 938,210Z"/>
<path d="M160,300 180,300 180,315 165,318Z"/><path d="M400,520 420,520 415,545 405,540Z"/>
</g>
<g class="b" transform="translate(580,100) scale(.3444,.3333)">
<path d="M500,810 515,805 525,830 505,835Z"/><path d="M120,578 135,578 125,600Z"/>
</g>
<!-- specks -->
<g class="p" transform="translate(50,100) scale(.3444,.3333)">
<path d="M165,300 180,310 168,318Z"/><path d="M403,525 415,525 408,535Z"/><path d="M335,1070 342,1070 338,1080Z"/>
</g>
</g>
<!-- grid -->
<g stroke="#b0b0b0" stroke-width="1.2" stroke-dasharray="3 8" fill="none">
<path d="M32,115H1132M32,186H1132M32,256H1132M32,327H1132M32,397H1132M32,467H1132M32,538H1132M32,608H1132M32,678H1132M32,749H1132M32,819H1132M32,889H1132"/>
<path d="M131,101V908M248,101V908M366,101V908M483,101V908M600,101V908M717,101V908M835,101V908M952,101V908M1069,101V908"/>
</g>
<!-- grey provinces -->
<g fill="none" stroke="#a6a6a6" stroke-width="1.6" stroke-linejoin="round">
<g transform="translate(420,380) scale(.3333)" stroke-width="4.8">
<path d="M640,178 650,250 625,340 660,370 660,420 620,470 585,490 640,530 640,590 610,620 590,635 545,625"/>
<path d="M620,130 600,100"/><path d="M640,210 680,205 740,240 820,240 830,150 820,140 740,90"/>
<path d="M740,240 710,330 780,400 810,400 860,450 900,460"/><path d="M710,330 660,370"/>
<path d="M780,400 680,500 690,560 680,620"/><path d="M830,240 860,280 810,320 810,400"/>
<path d="M600,670 650,660 710,710 640,720 600,680"/><path d="M680,620 800,630 870,600 900,560"/>
<path d="M640,740 600,680"/>
</g>
<g transform="translate(700,400) scale(.3333)" stroke-width="4.8">
<path d="M0,90 50,110 90,145 150,170 160,140 200,160 215,190 190,260 150,290 165,330 70,395 55,400 100,420 60,450 40,520 0,570"/>
<path d="M215,190 240,130 270,125 300,170 340,180 380,130"/>
<path d="M190,260 240,275 260,190 300,200 320,190 380,240 370,265 400,280 430,300 490,320 530,320"/>
<path d="M300,200 270,310 290,340 270,390 320,460 310,490 240,510 210,470 215,430 220,365 240,370 250,355 270,390"/>
<path d="M290,345 350,345 400,375 440,380 495,370 540,410 625,460 590,490 560,550 490,570 470,570 450,535 370,550 320,490"/>
<path d="M440,380 430,440 380,455 320,470"/><path d="M540,410 540,370"/><path d="M495,340 520,330"/>
<path d="M60,400 110,430 165,520 170,550 170,610 235,650 235,715 205,715"/>
<path d="M165,545 210,510 270,525 280,620 235,650"/><path d="M280,620 300,620 320,690 345,730"/>
<path d="M320,490 360,590 400,630"/><path d="M410,610 440,620"/>
<path d="M590,490 640,610 680,570 640,460 690,430 720,440"/><path d="M680,570 740,590 720,660"/>
<path d="M835,430 820,500 780,550 810,600 790,660"/><path d="M780,555 740,590"/><path d="M560,550 575,660"/>
<path d="M0,590 50,620 0,660"/><path d="M50,620 45,660 70,725"/>
</g>
<g transform="translate(580,620) scale(.3444,.3333)" stroke-width="4.8">
<path d="M155,30 135,120 145,155"/><path d="M210,345 225,330 240,345 225,368 210,365Z"/>
<path d="M155,55 200,85 265,120 265,170 305,215"/>
</g>
</g>
<!-- coast -->
<g fill="none" stroke="#111" stroke-width="1.4" stroke-linejoin="round">
<g transform="translate(50,100) scale(.3444,.3333)" stroke-width="4.2">
<path d="M0,320 18,325 10,360 40,345 40,380 70,385 50,350 110,355 190,400 200,430 320,415 375,460 360,500 330,510 330,525 385,550 320,540 315,590 340,590 360,560 375,595 430,580 470,610 480,590 550,605 590,600 665,650 700,680 745,735 800,765 850,762 872,800 830,858 720,865 640,870 600,900 575,925 530,935 525,895 545,870 510,915 410,942 370,932 335,910 250,905 150,895 80,905 0,912"/>
<path d="M1020,460 1030,430 1070,415 1085,390 1120,380 1165,410 1215,380 1245,330 1255,340 1250,400 1210,478 1160,490 1090,498 1025,492Z"/>
<path d="M1240,255 1258,237 1285,255 1245,285Z"/><path d="M1485,108 1500,135 1540,130 1530,145 1495,145Z"/><path d="M1442,175 1447,195"/>
<path d="M380,560 405,565 395,575 382,570Z"/>
</g>
<g transform="translate(580,100) scale(.3444,.3333)" stroke-width="4.2">
<path d="M50,70 65,65 90,70 100,110 78,100 55,85Z"/><path d="M110,110 165,112 180,150 115,130Z"/><path d="M200,150 240,170 243,178Z"/><path d="M352,252 356,275"/>
</g>
<g transform="translate(420,380) scale(.3333)" stroke-width="4.2">
<path d="M200,22 260,13 320,45 300,52 225,35Z"/>
<path d="M0,670 120,690 230,715 280,710 320,660 420,660 430,610 380,575 300,500 255,445 290,430 290,410 265,375 280,350 285,310 295,285 270,270 200,220 150,210 110,205 60,208 25,180 30,150 55,115 130,85 250,70 320,95 370,120 420,150 425,170 470,150 520,170 600,175 640,178"/>
<path d="M620,140 660,95 730,90 810,120 900,80"/>
<path d="M520,640 560,690 565,670 535,640"/>
<path d="M640,690 675,685 640,680"/>
</g>
<g transform="translate(50,450) scale(.3444,.3333)" stroke-width="4.2">
<path d="M1480,400 1480,450 1380,450 1350,500 1290,495 1230,490 1150,480 1030,465 1030,445 945,435 850,400 775,420 755,510 800,560 880,580 950,670 985,670 985,650 970,640 1020,590 1130,580 1300,620 1410,605 1570,585"/>
<path d="M1155,290 1185,275 1240,295 1310,335 1325,385 1260,370 1180,325Z"/>
<path d="M985,430 1000,412 1020,425 1005,440Z"/><path d="M1040,445 1065,440 1060,455 1030,455Z"/>
<path d="M1018,640 1050,645 1062,655 1030,658Z"/>
<path d="M0,578 40,597 100,600 120,620 150,680 165,718 110,740 40,745 0,710"/>
</g>
<g transform="translate(580,620) scale(.3444,.3333)" stroke-width="4.2">
<path d="M0,75 60,90 130,150 175,200 185,240 165,270 210,275 255,340 290,260 380,130 365,50 410,70 460,30 490,10 500,0"/>
<path d="M215,350 228,335 235,355 222,362Z"/><path d="M1445,130 1470,125 1472,148 1445,145Z"/>
</g>
<g transform="translate(700,400) scale(.3333)" stroke-width="4.2">
<path d="M25,770 15,720 40,700 70,725 110,690 160,650 200,670 205,740 230,750 300,735 350,735 400,660 440,635 510,650 540,645 570,660 680,645 720,660 790,665 830,710 850,745 885,745 900,690 950,690 970,640 995,580 880,470 830,420 770,400 740,415 650,395 600,370 535,375 535,320 680,330 705,285 680,260 640,290 610,270 490,290 445,200 440,140 410,125 380,130 340,155 270,110 240,85 210,95 140,55 110,30 70,30 30,20 0,50"/>
<path d="M835,760 860,755 905,775 905,785 860,780 835,770Z"/>
<path d="M740,645 755,638 770,655 755,662Z"/><path d="M750,680 758,680 758,690 750,690Z"/>
</g>
</g>
<!-- black specks -->
<g fill="#111"><rect x="471" y="452" width="2" height="2"/><rect x="488" y="485" width="2" height="2"/><rect x="554" y="492" width="2" height="2"/><rect x="617" y="493" width="2" height="2"/><rect x="747" y="461" width="2" height="2"/><rect x="804" y="525" width="2" height="2"/><rect x="990" y="559" width="2" height="2"/><rect x="1025" y="599" width="2" height="2"/></g>
<rect x="53" y="901" width="1061" height="1" fill="#8fd4ff"/>
<!-- titles -->
<text class="ti" x="401" y="33" textLength="93" lengthAdjust="spacing">Indice</text>
<text class="ti" x="519" y="33" textLength="36" lengthAdjust="spacing">de</text>
<text class="ti" x="578" y="33" textLength="243" lengthAdjust="spacing">Levantamiento</text>
<g class="r2">
<text x="58" y="61" textLength="136" lengthAdjust="spacingAndGlyphs">30−Nov−2025</text>
<text x="291" y="61" textLength="46" lengthAdjust="spacingAndGlyphs">0100</text>
<text x="351" y="61" textLength="33" lengthAdjust="spacingAndGlyphs">UTC</text>
<text x="397" y="62" font-size="20" textLength="9" lengthAdjust="spacingAndGlyphs">/</text>
<text x="420" y="61" textLength="40" lengthAdjust="spacingAndGlyphs">9:00</text>
<text x="473" y="61" textLength="28" lengthAdjust="spacingAndGlyphs">pm</text>
<text x="514" y="61" textLength="42" lengthAdjust="spacingAndGlyphs">Hora</text>
<text x="569" y="61" textLength="47" lengthAdjust="spacingAndGlyphs">Local</text>
</g>
<g class="r3">
<text x="45" y="83" textLength="89" lengthAdjust="spacingAndGlyphs">Pronóstico</text>
<text x="145" y="83" textLength="29" lengthAdjust="spacingAndGlyphs">con</text>
<text x="185" y="83" textLength="13" lengthAdjust="spacingAndGlyphs">el</text>
<text x="210" y="83" textLength="56" lengthAdjust="spacingAndGlyphs">Modelo</text>
<text x="277" y="83" textLength="100" lengthAdjust="spacingAndGlyphs">Atmósferico</text>
<text x="388" y="83" textLength="32" lengthAdjust="spacingAndGlyphs">WRF</text>
<text x="432" y="83" textLength="91" lengthAdjust="spacingAndGlyphs">inicializado</text>
<text x="534" y="83" textLength="10" lengthAdjust="spacingAndGlyphs">a</text>
<text x="554" y="83" textLength="24" lengthAdjust="spacingAndGlyphs">las</text>
<text x="589" y="83" textLength="184" lengthAdjust="spacingAndGlyphs">0600UTC_28NOV2025</text>
<text x="784" y="83" textLength="9" lengthAdjust="spacingAndGlyphs">y</text>
<text x="803" y="83" textLength="47" lengthAdjust="spacingAndGlyphs">válido</text>
<text x="862" y="83" textLength="45" lengthAdjust="spacingAndGlyphs">hasta</text>
<text x="917" y="83" textLength="24" lengthAdjust="spacingAndGlyphs">las</text>
<text x="962" y="83" textLength="185" lengthAdjust="spacingAndGlyphs">0600UTC_30NOV2025</text>
</g>
<!-- axis labels -->
<g class="lab">
<text x="5" y="120" textLength="20" lengthAdjust="spacingAndGlyphs">22N</text>
<text x="2" y="191" textLength="23" lengthAdjust="spacingAndGlyphs">1.5N</text>
<text x="5" y="261" textLength="20" lengthAdjust="spacingAndGlyphs">21N</text>
<text x="2" y="332" textLength="23" lengthAdjust="spacingAndGlyphs">0.5N</text>
<text x="5" y="402" textLength="20" lengthAdjust="spacingAndGlyphs">20N</text>
<text x="2" y="472" textLength="23" lengthAdjust="spacingAndGlyphs">9.5N</text>
<text x="5" y="543" textLength="20" lengthAdjust="spacingAndGlyphs">19N</text>
<text x="2" y="613" textLength="23" lengthAdjust="spacingAndGlyphs">8.5N</text>
<text x="5" y="683" textLength="20" lengthAdjust="spacingAndGlyphs">18N</text>
<text x="2" y="754" textLength="23" lengthAdjust="spacingAndGlyphs">7.5N</text>
<text x="5" y="824" textLength="20" lengthAdjust="spacingAndGlyphs">17N</text>
<text x="2" y="894" textLength="23" lengthAdjust="spacingAndGlyphs">6.5N</text>
<text x="121" y="919" textLength="21" lengthAdjust="spacingAndGlyphs">76W</text>
<text x="238" y="919" textLength="21" lengthAdjust="spacingAndGlyphs">75W</text>
<text x="355" y="919" textLength="21" lengthAdjust="spacingAndGlyphs">74W</text>
<text x="473" y="919" textLength="21" lengthAdjust="spacingAndGlyphs">73W</text>
<text x="590" y="919" textLength="21" lengthAdjust="spacingAndGlyphs">72W</text>
<text x="707" y="919" textLength="21" lengthAdjust="spacingAndGlyphs">71W</text>
<text x="825" y="919" textLength="21" lengthAdjust="spacingAndGlyphs">70W</text>
<text x="942" y="919" textLength="21" lengthAdjust="spacingAndGlyphs">69W</text>
<text x="1059" y="919" textLength="21" lengthAdjust="spacingAndGlyphs">68W</text>
</g>
<text x="6" y="922" font-size="16" fill="#222" textLength="95" lengthAdjust="spacingAndGlyphs">GrADS/COLA</text>
<!-- color bar -->
<rect x="1145" y="98" width="18" height="806" fill="#d6d6d6"/>
<rect x="1146" y="101" width="16" height="87" class="k"/>
<rect x="1146" y="188" width="16" height="89" class="r"/>
<rect x="1146" y="278" width="16" height="89" class="o"/>
<rect x="1146" y="367" width="16" height="89" class="y"/>
<rect x="1146" y="456" width="16" height="89" class="g"/>
<rect x="1146" y="545" width="16" height="90" class="t"/>
<rect x="1146" y="635" width="16" height="89" class="b"/>
<rect x="1146" y="724" width="16" height="89" class="p"/>
<rect x="1146" y="813" width="16" height="90" class="m"/>
<g class="cb">
<text x="1167" y="194">−42.6</text><text x="1167" y="283">−42.7</text><text x="1167" y="373">−42.8</text><text x="1167" y="462">−42.9</text>
<text x="1167" y="551">−43</text><text x="1167" y="641">−43.1</text><text x="1167" y="730">−43.2</text><text x="1167" y="819">−43.3</text>
</g>
<!-- credit box -->
<rect x="916" y="878" width="208" height="20" fill="#fff" stroke="#bdbdbd" stroke-width="1.2"/>
<text x="931" y="894" font-size="15" fill="#1e8cff" textLength="22" lengthAdjust="spacingAndGlyphs">Sis</text>
<text x="953" y="894" font-size="17" fill="#2846ff" textLength="16" lengthAdjust="spacingAndGlyphs">π</text>
<text x="974" y="894" font-size="15" fill="#444" textLength="10" lengthAdjust="spacingAndGlyphs">−</text>
<text x="992" y="894" font-size="15" fill="#444" textLength="128" lengthAdjust="spacingAndGlyphs">ONAMET/REP.DOM.</text>
</svg>
</body></html>
